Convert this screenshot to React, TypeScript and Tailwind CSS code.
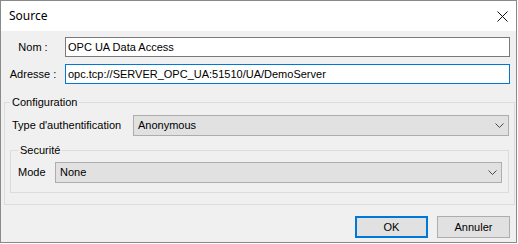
import { ReactNode } from "react";

const font = { fontFamily: '"Liberation Sans", Arial, sans-serif' };

const Chevron = () => (
    <svg width="9" height="5" viewBox="0 0 9 5" className="shrink-0">
        <polyline points="0.5,0.5 4.5,4.5 8.5,0.5" fill="none" stroke="#4a4a4a" strokeWidth="1" />
    </svg>
);

const Select = ({ value, className }: { value: string; className: string }) => (
    <div className={`flex h-[21px] items-center justify-between border border-[#adadad] bg-[#e1e1e1] pr-[4px] pl-[4px] ${className}`}>
        <span>{value}</span>
        <Chevron />
    </div>
);

const GroupBox = ({ title, className, children }: { title: string; className: string; children: ReactNode }) => (
    <fieldset className={`border border-[#dcdcdc] ${className}`}>
        <legend className="px-[2px] leading-[14px]">{title}</legend>
        {children}
    </fieldset>
);

const Button = ({ label, primary }: { label: string; primary?: boolean }) => (
    <button
        className={`flex h-[22px] w-[73px] items-center justify-center bg-[#e1e1e1] ${
            primary ? "border-2 border-[#0078d7]" : "border border-[#adadad]"
        }`}
    >
        {label}
    </button>
);

export default function App() {
    return (
        <div className="h-[244px] w-[518px] bg-white text-[11px] text-black" style={font}>
            <div className="flex h-[243px] w-[517px] flex-col border border-[#8a8a8a] bg-[#f0f0f0]">
                {/* title bar */}
                <div className="flex h-[30px] shrink-0 items-center justify-between bg-white pr-[8px] pl-[8px]">
                    <span className="text-[12px]" style={{ fontFamily: '"Noto Sans", sans-serif' }}>
                        Source
                    </span>
                    <svg width="11" height="11" viewBox="0 0 11 11">
                        <path d="M0.5 0.5 L10.5 10.5 M10.5 0.5 L0.5 10.5" stroke="#111" strokeWidth="1" />
                    </svg>
                </div>

                <div className="flex flex-col pt-[6px]">
                    <div className="flex items-center">
                        <span className="w-[64px] text-center">Nom :</span>
                        <div className="flex h-[20px] w-[445px] items-center border border-[#7a7a7a] bg-white pl-[2px]">
                            OPC UA Data Access
                        </div>
                    </div>
                    <div className="mt-[7px] flex items-center">
                        <span className="w-[64px] text-center">Adresse :</span>
                        <div className="flex h-[20px] w-[445px] items-center border border-[#0078d7] bg-white pl-[2px]">
                            opc.tcp://SERVER_OPC_UA:51510/UA/DemoServer
                        </div>
                    </div>

                    <GroupBox title="Configuration" className="mt-[11px] ml-[3px] w-[510px] pr-[5px] pb-[11px] pl-[5px]">
                        <div className="mt-[6px] flex items-center">
                            <span className="w-[123px] pl-[2px]">Type d'authentification</span>
                            <Select value="Anonymous" className="flex-1" />
                        </div>
                        <GroupBox title="Securité" className="mt-[7px] w-[499px] pr-[6px] pb-[9px] pl-[7px]">
                            <div className="mt-[5px] flex items-center">
                                <span className="w-[37px]">Mode</span>
                                <Select value="None" className="flex-1" />
                            </div>
                        </GroupBox>
                    </GroupBox>

                    <div className="mt-[11px] flex justify-end gap-[9px] pr-[6px]">
                        <Button label="OK" primary />
                        <Button label="Annuler" />
                    </div>
                </div>
            </div>
        </div>
    );
}
